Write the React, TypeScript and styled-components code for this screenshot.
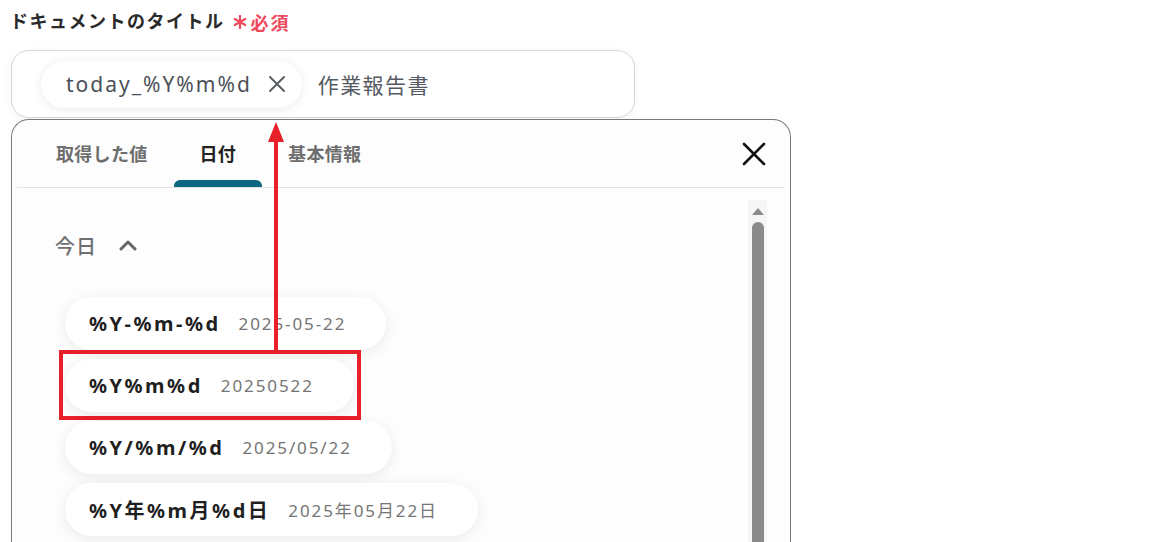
import styled, { createGlobalStyle } from "styled-components";

const GlobalStyle = createGlobalStyle`
  html, body {
    margin: 0;
    padding: 0;
    background: #ffffff;
    font-family: "Noto Sans", "Noto Sans CJK JP", sans-serif;
    overflow: hidden;
  }
`;

const Page = styled.div`
  position: relative;
  width: 1173px;
  height: 542px;
  padding: 8px 0 0 11px;
  box-sizing: border-box;
  overflow: hidden;
`;

const Label = styled.div`
  display: flex;
  align-items: center;
  gap: 8px;
  height: 24px;
  margin-left: -1px;
`;

const LabelText = styled.span`
  font-family: "Noto Sans CJK JP", sans-serif;
  font-size: 18px;
  font-weight: 700;
  letter-spacing: 1.5px;
  color: #2a2a2a;
`;

const Required = styled.span`
  display: flex;
  align-items: center;
  gap: 4px;
  font-family: "Noto Sans CJK JP", sans-serif;
  font-size: 18px;
  font-weight: 700;
  letter-spacing: 2px;
  color: #ef4a5e;
  margin-top: 3px;
`;

const Field = styled.div`
  margin-top: 18px;
  width: 624px;
  height: 68px;
  box-sizing: border-box;
  border: 1px solid #d3d6db;
  border-radius: 18px;
  background: #fff;
  box-shadow: 0 2px 10px rgba(0, 0, 0, 0.05);
  display: flex;
  align-items: center;
  padding-left: 29px;
  gap: 16px;
`;

const Chip = styled.div`
  height: 47px;
  display: flex;
  align-items: center;
  gap: 16px;
  padding: 0 16px 0 25px;
  border-radius: 24px;
  background: #fff;
  box-shadow: 0 1px 10px rgba(0, 0, 0, 0.09);
  font-size: 21px;
  letter-spacing: 2px;
  color: #4b5058;
`;

const FieldText = styled.span`
  font-family: "Noto Sans CJK JP", sans-serif;
  font-size: 21px;
  letter-spacing: 1.4px;
  color: #555a62;
`;

const Panel = styled.div`
  margin-top: 1px;
  width: 780px;
  height: 500px;
  box-sizing: border-box;
  border: 1px solid #7a7a7a;
  border-bottom: none;
  border-radius: 18px 18px 0 0;
  background: #fdfdfd;
  padding: 0 5px;
  display: flex;
  flex-direction: column;
`;

const TabBar = styled.div`
  height: 67px;
  display: flex;
  align-items: stretch;
  padding-left: 13px;
  border-bottom: 1px solid #e3e3e3;
`;

const Tab = styled.div<{ active?: boolean }>`
  position: relative;
  padding: 0 26px;
  display: flex;
  align-items: center;
  padding-bottom: 2px;
  font-family: "Noto Sans CJK JP", sans-serif;
  font-size: 18px;
  font-weight: 700;
  letter-spacing: 0.3px;
  color: ${(p) => (p.active ? "#222" : "#6e6e6e")};
  &::after {
    content: "";
    display: ${(p) => (p.active ? "block" : "none")};
    position: absolute;
    left: 0;
    right: 0;
    bottom: 0;
    height: 7px;
    border-radius: 6px 6px 0 0;
    background: #0b6880;
  }
`;

const CloseButton = styled.button`
  margin-left: auto;
  margin-right: 18px;
  align-self: center;
  background: none;
  border: none;
  padding: 0;
  width: 26px;
  height: 26px;
  display: flex;
  align-items: center;
  justify-content: center;
`;

const Body = styled.div`
  flex: 1;
  display: flex;
`;

const Content = styled.div`
  flex: 1;
  padding: 45px 0 0 38px;
`;

const SectionHead = styled.div`
  display: flex;
  align-items: center;
  gap: 22px;
  height: 24px;
  font-family: "Noto Sans CJK JP", sans-serif;
  font-size: 20px;
  font-weight: 500;
  color: #6f6f6f;
  letter-spacing: 1px;
`;

const List = styled.div`
  margin-top: 40px;
  padding-left: 10px;
  display: flex;
  flex-direction: column;
  align-items: flex-start;
  gap: 9px;
`;

const Item = styled.div`
  position: relative;
  height: 53px;
  display: flex;
  align-items: center;
  gap: 18px;
  padding: 0 40px 0 24px;
  border-radius: 27px;
  background: #fff;
  box-shadow: 0 3px 14px rgba(0, 0, 0, 0.08);
`;

const Format = styled.span`
  font-family: "Noto Sans", "Noto Sans CJK JP", sans-serif;
  font-size: 20px;
  font-weight: 700;
  letter-spacing: 2.5px;
  color: #1f1f1f;
`;

const Sample = styled.span`
  font-family: "Noto Sans", "Noto Sans CJK JP", sans-serif;
  font-size: 17px;
  letter-spacing: 1.9px;
  color: #757575;
`;

const Highlight = styled.div`
  position: absolute;
  left: -6px;
  right: -7px;
  top: -9px;
  bottom: -8px;
  border: 4px solid #e8202a;
  pointer-events: none;
`;

const ScrollTrack = styled.div`
  width: 19px;
  margin: 12px 18px 0 0;
  background: #f6f6f6;
  display: flex;
  flex-direction: column;
  align-items: center;
  padding-top: 8px;
  gap: 7px;
`;

const ScrollArrow = styled.div`
  width: 0;
  height: 0;
  border-left: 6px solid transparent;
  border-right: 6px solid transparent;
  border-bottom: 7px solid #8a8a8a;
`;

const ScrollThumb = styled.div`
  flex: 1;
  width: 12px;
  border-radius: 6px 6px 0 0;
  background: #8a8a8a;
`;

const Arrow = styled.svg`
  position: absolute;
  left: 262px;
  top: 118px;
  pointer-events: none;
`;

const items = [
  { format: "%Y-%m-%d", sample: "2025-05-22" },
  { format: "%Y%m%d", sample: "20250522", marked: true },
  { format: "%Y/%m/%d", sample: "2025/05/22" },
  { format: "%Y年%m月%d日", sample: "2025年05月22日" },
];

export default function App() {
  return (
    <Page>
      <GlobalStyle />
      <Label>
        <LabelText>ドキュメントのタイトル</LabelText>
        <Required>
          <svg width="14" height="14" viewBox="0 0 14 14">
            <g stroke="#ef4a5e" strokeWidth="2.2" strokeLinecap="round">
              <line x1="7" y1="1" x2="7" y2="13" />
              <line x1="1.8" y1="4" x2="12.2" y2="10" />
              <line x1="1.8" y1="10" x2="12.2" y2="4" />
            </g>
          </svg>
          必須
        </Required>
      </Label>

      <Field>
        <Chip>
          today_%Y%m%d
          <svg width="18" height="18" viewBox="0 0 18 18">
            <path d="M2 2 L16 16 M16 2 L2 16" stroke="#5a5e66" strokeWidth="2" strokeLinecap="round" />
          </svg>
        </Chip>
        <FieldText>作業報告書</FieldText>
      </Field>

      <Panel>
        <TabBar>
          <Tab>取得した値</Tab>
          <Tab active>日付</Tab>
          <Tab>基本情報</Tab>
          <CloseButton>
            <svg width="24" height="24" viewBox="0 0 24 24">
              <path d="M2 2 L22 22 M22 2 L2 22" stroke="#111" strokeWidth="2.6" strokeLinecap="round" />
            </svg>
          </CloseButton>
        </TabBar>
        <Body>
          <Content>
            <SectionHead>
              今日
              <svg width="18" height="12" viewBox="0 0 18 12">
                <path d="M2 10 L9 3 L16 10" fill="none" stroke="#666" strokeWidth="3" strokeLinecap="round" strokeLinejoin="round" />
              </svg>
            </SectionHead>
            <List>
              {items.map((it) => (
                <Item key={it.format}>
                  <Format>{it.format}</Format>
                  <Sample>{it.sample}</Sample>
                  {it.marked && <Highlight />}
                </Item>
              ))}
            </List>
          </Content>
          <ScrollTrack>
            <ScrollArrow />
            <ScrollThumb />
          </ScrollTrack>
        </Body>
      </Panel>

      <Arrow width="28" height="236" viewBox="0 0 28 236">
        <rect x="12" y="20" width="4" height="213" fill="#e8202a" />
        <polygon points="14,4 22,24 6,24" fill="#e8202a" />
      </Arrow>
    </Page>
  );
}
